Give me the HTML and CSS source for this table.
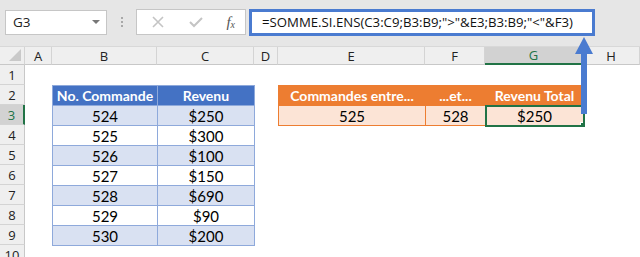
FILE: index.html
```html
<!DOCTYPE html>
<html lang="fr">
<head>
    <meta charset="UTF-8">
    <title>SOMME.SI.ENS</title>
    <link rel="stylesheet" href="styles.css">
</head>
<body>
    <div class="toolbar">
        <div class="name-box">
            <span>G3</span>
            <span class="caret"></span>
        </div>
        <div class="grip"><i></i><i></i><i></i></div>
        <div class="fx-buttons">
            <svg width="14" height="14" viewBox="0 0 14 14"><path d="M2 2 L12 12 M12 2 L2 12" stroke="#c4c4c4" stroke-width="1.6" fill="none"/></svg>
            <svg width="16" height="14" viewBox="0 0 16 14"><path d="M2 7 L6 11 L14 3" stroke="#c4c4c4" stroke-width="2" fill="none"/></svg>
            <span class="fx">f<sub>x</sub></span>
        </div>
        <div class="formula">=SOMME.SI.ENS(C3:C9;B3:B9;"&gt;"&amp;E3;B3:B9;"&lt;"&amp;F3)</div>
    </div>

    <div class="sheet">
        <!-- column headers -->
        <div class="corner"></div>
        <div class="col-head">A</div>
        <div class="col-head">B</div>
        <div class="col-head">C</div>
        <div class="col-head">D</div>
        <div class="col-head">E</div>
        <div class="col-head">F</div>
        <div class="col-head active">G</div>
        <div class="col-head">H</div>

        <!-- row headers -->
        <div class="row-head" style="grid-row: 2">1</div>
        <div class="row-head" style="grid-row: 3">2</div>
        <div class="row-head active" style="grid-row: 4">3</div>
        <div class="row-head" style="grid-row: 5">4</div>
        <div class="row-head" style="grid-row: 6">5</div>
        <div class="row-head" style="grid-row: 7">6</div>
        <div class="row-head" style="grid-row: 8">7</div>
        <div class="row-head" style="grid-row: 9">8</div>
        <div class="row-head" style="grid-row: 10">9</div>
        <div class="row-head" style="grid-row: 11">10</div>

        <div class="orders">
            <table class="blue">
                <colgroup><col style="width: 105px"><col style="width: 97px"></colgroup>
                <tr><th>No. Commande</th><th>Revenu</th></tr>
                <tr><td>524</td><td>$250</td></tr>
                <tr><td>525</td><td>$300</td></tr>
                <tr><td>526</td><td>$100</td></tr>
                <tr><td>527</td><td>$150</td></tr>
                <tr><td>528</td><td>$690</td></tr>
                <tr><td>529</td><td>$90</td></tr>
                <tr><td>530</td><td>$200</td></tr>
            </table>
        </div>

        <div class="summary">
            <table class="orange">
                <colgroup><col style="width: 147px"><col style="width: 60px"><col style="width: 98px"></colgroup>
                <tr><th>Commandes entre...</th><th>...et...</th><th>Revenu Total</th></tr>
                <tr><td>525</td><td>528</td><td class="selected">$250</td></tr>
            </table>
        </div>
    </div>

    <svg class="pointer" width="20" height="78" viewBox="0 0 20 78">
        <path d="M9 0 L18 17 L12 17 L12 77 L6 77 L6 17 L0 17 Z" fill="#4a7bd0"/>
    </svg>
</body>
</html>
```

FILE: styles.css
```css
* {
    margin: 0;
    padding: 0;
    box-sizing: border-box;
}

body {
    position: relative;
    width: 640px;
    height: 257px;
    overflow: hidden;
    background-color: white;
    font-family: Lato, "Liberation Sans", sans-serif;
}

/* formula bar */
.toolbar {
    display: flex;
    align-items: center;
    height: 47px;
    padding: 0 0 2px 5px;
    background-color: #e6e6e6;
    border-bottom: 1px solid #d8d8d8;
    font-family: "Open Sans", sans-serif;
}

.name-box {
    display: flex;
    align-items: center;
    justify-content: space-between;
    width: 102px;
    height: 25px;
    padding: 0 6px 0 7px;
    background-color: white;
    border: 1px solid #c6c6c6;
    font-size: 13.5px;
    color: #222;
}

.caret {
    border-left: 4px solid transparent;
    border-right: 4px solid transparent;
    border-top: 4px solid #777;
}

.grip {
    display: flex;
    flex-direction: column;
    gap: 2px;
    margin: 0 13px 0 14px;
}

.grip i {
    display: block;
    width: 2px;
    height: 2px;
    background-color: #a8a8a8;
}

.fx-buttons {
    display: flex;
    align-items: center;
    justify-content: space-between;
    width: 110px;
    height: 26px;
    padding: 0 10px 0 14px;
    background-color: white;
    border: 1px solid #c6c6c6;
}

.fx {
    font-family: "Liberation Serif", serif;
    font-style: italic;
    font-size: 15px;
    color: #555;
}

.fx sub {
    font-size: 10px;
    vertical-align: -1px;
}

.formula {
    display: flex;
    align-items: center;
    width: 346px;
    height: 27px;
    margin-left: 3px;
    padding-left: 10px;
    background-color: white;
    border: 3px solid #4a7bd0;
    font-size: 13.2px;
    color: #111;
    white-space: nowrap;
}

/* worksheet grid */
.sheet {
    display: grid;
    grid-template-columns: 25px 27px 105px 97px 24px 147px 60px 98px 1fr;
    grid-template-rows: 18px repeat(10, 20px);
    font-size: 15px;
}

.corner {
    position: relative;
    background-color: #efefef;
    border-right: 1px solid #d4d4d4;
    border-bottom: 1px solid #c8c8c8;
}

.corner::after {
    content: "";
    position: absolute;
    right: 3px;
    bottom: 3px;
    border-left: 12px solid transparent;
    border-bottom: 12px solid #c9c9c9;
}

.col-head {
    display: flex;
    align-items: center;
    justify-content: center;
    background-color: #efefef;
    border-right: 1px solid #d4d4d4;
    border-bottom: 1px solid #c8c8c8;
    font-family: "Open Sans", sans-serif;
    font-size: 13px;
    color: #222;
}

.col-head.active {
    background-color: #d2d2d2;
    border-bottom: 2px solid #217346;
    color: #217346;
}

.row-head {
    grid-column: 1;
    display: flex;
    align-items: center;
    justify-content: center;
    background-color: #efefef;
    border-right: 1px solid #c8c8c8;
    border-bottom: 1px solid #d4d4d4;
    font-family: "Open Sans", sans-serif;
    font-size: 13px;
    color: #222;
}

.row-head.active {
    background-color: #d2d2d2;
    border-right: 2px solid #217346;
    color: #217346;
}

.orders {
    grid-column: 3 / 5;
    grid-row: 3 / 11;
}

.summary {
    grid-column: 6 / 9;
    grid-row: 3 / 5;
}

table {
    width: 100%;
    height: 100%;
    border-collapse: collapse;
    table-layout: fixed;
}

th, td {
    height: 20px;
    padding: 0;
    text-align: center;
    white-space: nowrap;
    overflow: hidden;
    line-height: 18px;
}

th {
    font-size: 14px;
    font-weight: bold;
    color: white;
}

.blue th, .blue td {
    border: 1px solid #8ea9db;
}

.blue th {
    background-color: #4472c4;
}

.blue tr:nth-child(even) td {
    background-color: #d9e1f2;
}

.orange th, .orange td {
    border: 1px solid #ed7d31;
}

.orange th {
    background-color: #ed7d31;
}

.orange td {
    background-color: #fce4d6;
}

.selected {
    position: relative;
    outline: 2px solid #217346;
    outline-offset: -1px;
}

.selected::after {
    content: "";
    position: absolute;
    right: -4px;
    bottom: -4px;
    width: 5px;
    height: 5px;
    background-color: #217346;
    border: 1px solid white;
}

/* arrow from the selected cell up to the formula */
.pointer {
    position: absolute;
    left: 575px;
    top: 37px;
}
```
